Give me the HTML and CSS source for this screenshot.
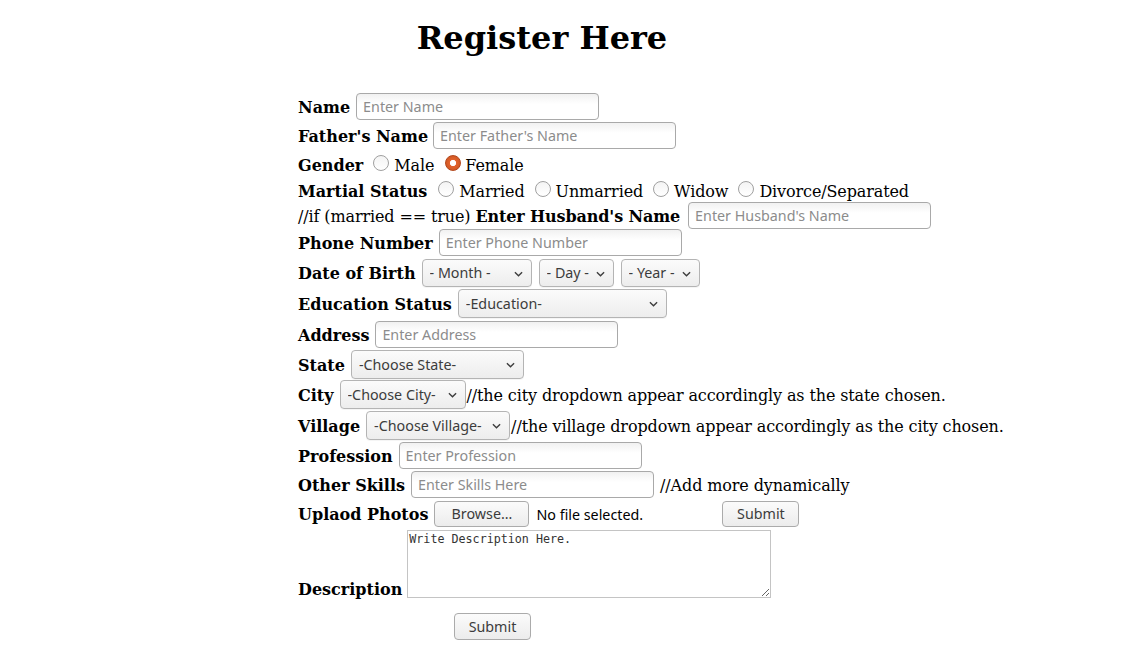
FILE: index.html
```html
<!DOCTYPE html>
<html>
<head>
<meta charset="utf-8">
<title>Register Here</title>
<link rel="stylesheet" href="styles.css">
</head>
<body>
<div class="page">
  <h1 class="title">Register Here</h1>
  <form class="form">
    <div class="row r-name"><b>Name</b><input class="txt" type="text" placeholder="Enter Name"></div>
    <div class="row r-father"><b>Father's Name</b><input class="txt" type="text" placeholder="Enter Father's Name"></div>
    <div class="row r-gender"><b>Gender</b>
      <label class="opt"><input class="radio" type="radio" name="g">Male</label>
      <label class="opt"><input class="radio" type="radio" name="g" checked>Female</label>
    </div>
    <div class="row r-martial"><b>Martial Status</b>
      <label class="opt"><input class="radio" type="radio" name="m">Married</label>
      <label class="opt"><input class="radio" type="radio" name="m">Unmarried</label>
      <label class="opt"><input class="radio" type="radio" name="m">Widow</label>
      <label class="opt"><input class="radio" type="radio" name="m">Divorce/Separated</label>
    </div>
    <div class="row r-husband"><span class="plain">//if (married == true) <b>Enter Husband's Name</b></span><input class="txt" type="text" placeholder="Enter Husband's Name"></div>
    <div class="row r-phone"><b>Phone Number</b><input class="txt" type="text" placeholder="Enter Phone Number"></div>
    <div class="row r-dob"><b>Date of Birth</b>
      <span class="sel w-month"><select><option>- Month -</option></select><svg class="chev" viewBox="0 0 10 6"><path d="M1 1 L5 5 L9 1"/></svg></span>
      <span class="sel w-day"><select><option>- Day -</option></select><svg class="chev" viewBox="0 0 10 6"><path d="M1 1 L5 5 L9 1"/></svg></span>
      <span class="sel w-year"><select><option>- Year -</option></select><svg class="chev" viewBox="0 0 10 6"><path d="M1 1 L5 5 L9 1"/></svg></span>
    </div>
    <div class="row r-edu"><b>Education Status</b>
      <span class="sel w-edu"><select><option>-Education-</option></select><svg class="chev" viewBox="0 0 10 6"><path d="M1 1 L5 5 L9 1"/></svg></span>
    </div>
    <div class="row r-address"><b>Address</b><input class="txt" type="text" placeholder="Enter Address"></div>
    <div class="row r-state"><b>State</b>
      <span class="sel w-state"><select><option>-Choose State-</option></select><svg class="chev" viewBox="0 0 10 6"><path d="M1 1 L5 5 L9 1"/></svg></span>
    </div>
    <div class="row r-city"><b>City</b>
      <span class="sel w-city"><select><option>-Choose City-</option></select><svg class="chev" viewBox="0 0 10 6"><path d="M1 1 L5 5 L9 1"/></svg></span>
      <span class="note">//the city dropdown appear accordingly as the state chosen.</span>
    </div>
    <div class="row r-village"><b>Village</b>
      <span class="sel w-village"><select><option>-Choose Village-</option></select><svg class="chev" viewBox="0 0 10 6"><path d="M1 1 L5 5 L9 1"/></svg></span>
      <span class="note">//the village dropdown appear accordingly as the city chosen.</span>
    </div>
    <div class="row r-prof"><b>Profession</b><input class="txt" type="text" placeholder="Enter Profession"></div>
    <div class="row r-skills"><b>Other Skills</b><input class="txt" type="text" placeholder="Enter Skills Here"><span class="note skills-note">//Add more dynamically</span></div>
    <div class="row r-upload"><b>Uplaod Photos</b>
      <button class="btn browse" type="button">Browse…</button>
      <span class="nofile">No file selected.</span>
      <button class="btn upsubmit" type="button">Submit</button>
    </div>
    <div class="row r-desc"><b>Description</b><textarea class="area">Write Description Here.</textarea></div>
    <div class="row r-submit"><button class="btn submit" type="submit">Submit</button></div>
  </form>
</div>
</body>
</html>
```
FILE: styles.css
```css
* { box-sizing: border-box; }
html, body { margin: 0; padding: 0; background: #fff; }
body {
  font-family: "DejaVu Serif", serif;
  font-size: 16px;
  color: #000;
}
.page { padding-left: 298px; padding-top: 19px; }
.title {
  width: 488px;
  margin: 0;
  font-size: 32px;
  font-weight: bold;
  text-align: center;
  line-height: 38px;
  height: 38px;
}
.form { margin-top: 35px; display: flex; flex-direction: column; }
.row {
  display: flex;
  align-items: center;
  white-space: nowrap;
  height: 29px;
}
.row b { font-weight: bold; padding-top: 2px; }
.plain b { padding-top: 0; }
.plain, .note, .opt { letter-spacing: -0.12px; padding-top: 2px; }
.r-name b, .r-father b, .r-phone b, .r-address b, .r-prof b, .r-skills b, .r-upload b { margin-right: 6px; }
.r-father b { margin-right: 5px; }
.r-gender { height: 28px; }
.r-martial { height: 24px; }
.r-husband { height: 26px; }
.r-husband .plain { margin-right: 8px; }
.r-phone { height: 29px; }
.r-dob { height: 31px; }
.r-edu { height: 31px; }
.r-address { height: 30px; }
.r-state { height: 30px; }
.r-city { height: 31px; }
.r-village { height: 31px; }
.r-prof { height: 29px; }
.r-skills { height: 29px; }
.r-upload { height: 29px; }

.txt {
  width: 243px;
  height: 27px;
  margin: 0;
  padding: 0 6px;
  border: 1px solid #a9a9a9;
  border-radius: 4px;
  background: linear-gradient(#f1f1f1, #ffffff 40%);
  font-family: "Noto Sans", sans-serif;
  font-size: 14.3px;
  color: #333;
  outline: none;
}
.txt::placeholder { color: #8c8c8c; }

.opt { display: inline-flex; align-items: center; margin-left: 10px; }
.r-gender .opt + .opt { margin-left: 11px; }
.r-gender .opt + .opt .radio { margin-right: 4px; }
.r-martial .opt { margin-left: 10px; }
.r-martial .opt:first-of-type { margin-left: 11px; }
.radio {
  appearance: none;
  -webkit-appearance: none;
  width: 16px;
  height: 16px;
  margin: 0 5px 5px 0;
  border: 1px solid #a0a0a0;
  border-radius: 50%;
  background: linear-gradient(#f4f4f4, #ffffff);
}
.radio:checked {
  border-color: #b3471c;
  background: radial-gradient(circle, #ffffff 0 2.8px, #e2632d 3.4px, #c5511f 100%);
}

.sel { position: relative; display: inline-block; margin-left: 6px; }
.sel select {
  appearance: none;
  -webkit-appearance: none;
  height: 28px;
  margin: 0;
  padding: 0 0 0 7px;
  border: 1px solid #b4b4b4;
  border-radius: 4px;
  background: linear-gradient(#fbfbfb, #ededed);
  font-family: "Noto Sans", sans-serif;
  font-size: 14.3px;
  color: #3c3c3c;
  display: block;
  box-shadow: 0 1px 0 rgba(0,0,0,0.04);
}
.chev {
  position: absolute;
  right: 9px;
  top: 12px;
  width: 9px;
  height: 6px;
  fill: none;
  stroke: #3c3c3c;
  stroke-width: 1.5;
  pointer-events: none;
}
.w-month select { width: 110px; }
.w-day select { width: 75px; }
.w-year select { width: 79px; }
.w-day, .w-year { margin-left: 7px; }
.w-edu select { width: 209px; height: 29px; }
.w-state select { width: 173px; height: 29px; }
.w-city select { width: 126px; height: 29px; }
.w-village select { width: 144px; height: 29px; }
.w-state, .w-city, .w-village { margin-left: 6px; }

.note { margin-left: 1px; }
.skills-note { margin-left: 6px; }

.btn {
  height: 26px;
  margin: 0;
  padding: 0 10px;
  border: 1px solid #ababab;
  border-radius: 4px;
  background: linear-gradient(#fbfbfb, #ececec);
  font-family: "Noto Sans", sans-serif;
  font-size: 14.3px;
  color: #3c3c3c;
}
.browse { width: 95px; }
.nofile { font-family: "Noto Sans", sans-serif; font-size: 14.3px; color: #000; margin-left: 7px; width: 186px; padding-top: 1px; }
.upsubmit { width: 77px; }

.r-desc { height: auto; align-items: flex-end; margin-top: 2px; }
.r-desc b { margin-right: 5px; margin-bottom: 0; line-height: 1; }
.area {
  width: 364px;
  height: 68px;
  margin: 0;
  padding: 1px 1px;
  border: 1px solid #c4c4c4;
  font-family: "DejaVu Sans Mono", monospace;
  font-size: 11.7px;
  color: #333;
  resize: both;
  outline: none;
}
.r-submit { height: auto; margin-top: 15px; padding-left: 156px; }
.submit { width: 77px; height: 27px; }
```
